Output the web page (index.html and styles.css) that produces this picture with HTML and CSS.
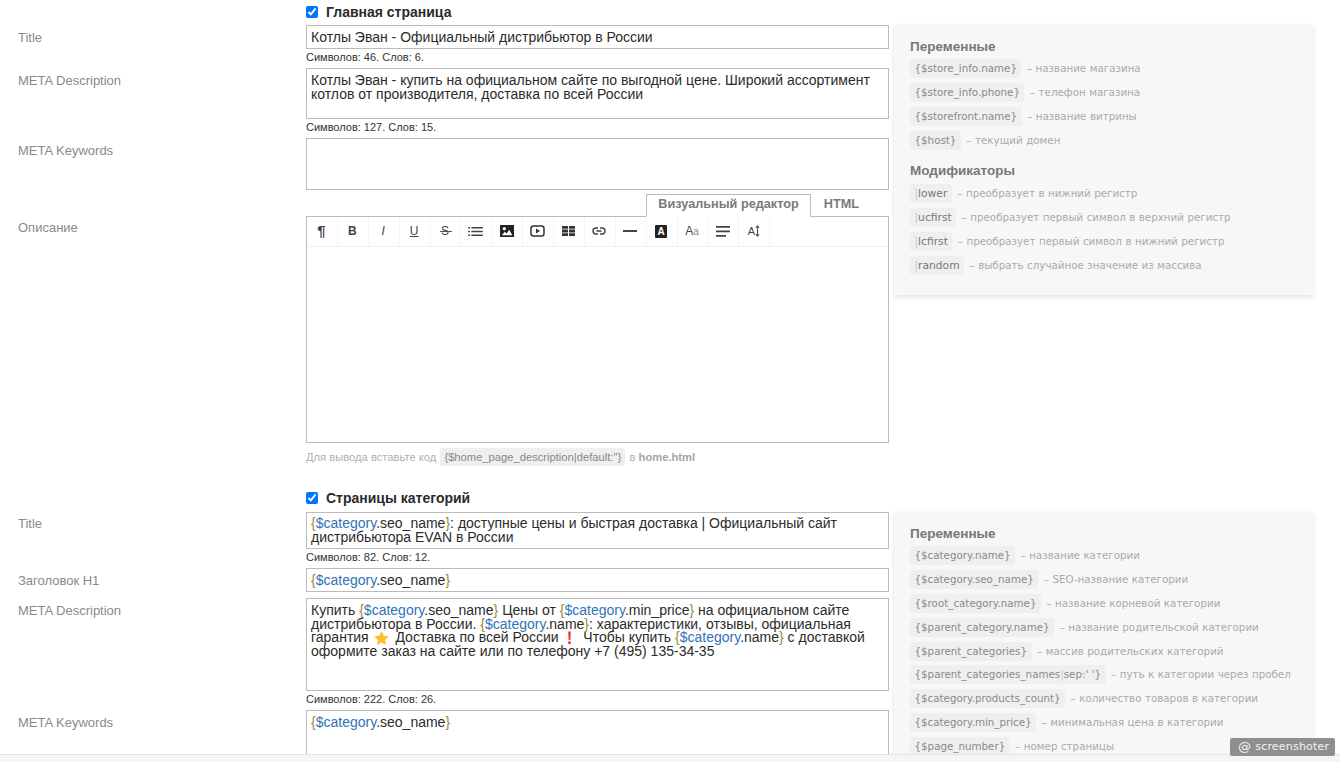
FILE: index.html
```html
<!DOCTYPE html>
<html lang="ru">
<head>
<meta charset="utf-8">
<title>SEO</title>
<link rel="stylesheet" href="styles.css">
</head>
<body>
<main class="page">
  <section class="section section-home">
    <div class="form">
      <label class="check"><input type="checkbox" checked> <span>Главная страница</span></label>
      <div class="row"><div class="label">Title</div><div class="field"><div class="box box-line">Котлы Эван - Официальный дистрибьютор в России</div><div class="count">Символов: 46. Слов: 6.</div></div></div>
      <div class="row"><div class="label">META Description</div><div class="field"><div class="box box-51">Котлы Эван - купить на официальном сайте по выгодной цене. Широкий ассортимент котлов от производителя, доставка по всей России</div><div class="count">Символов: 127. Слов: 15.</div></div></div>
      <div class="row"><div class="label">META Keywords</div><div class="field"><div class="box box-52"></div></div></div>
      <div class="row row-editor"><div class="label label-editor">Описание</div><div class="field">
        <div class="tabs"><span class="tab tab-active">Визуальный редактор</span><span class="tab">HTML</span></div>
        <div class="editor">
          <div class="toolbar">
            <span class="tool t-para">¶</span>
            <span class="tool t-b">B</span>
            <span class="tool t-i">I</span>
            <span class="tool t-u">U</span>
            <span class="tool t-s">S</span>
            <span class="tool"><svg width="15" height="11" viewBox="0 0 16 12"><path d="M0 1h2v1.600H0zM3.500 1H16v1.600H3.500zM0 5.200h2v1.600H0zM3.500 5.200H16v1.600H3.500zM0 9.400h2V11H0zM3.500 9.400H16V11H3.500z" fill="#444"/></svg></span>
            <span class="tool"><svg width="14" height="12" viewBox="0 0 14 12"><path d="M0 0h14v12H0z" fill="#222"/><circle cx="4.300" cy="3.700" r="1.600" fill="#fff"/><path d="M1.800 10.200l3-3.400 1.800 1.600 2.700-3.600 3 5.400z" fill="#fff"/></svg></span>
            <span class="tool"><svg width="15" height="12" viewBox="0 0 15 12"><rect x="1" y="1" width="13" height="10" rx="2.500" fill="none" stroke="#333" stroke-width="1.500"/><path d="M6 3.600l4 2.400-4 2.400z" fill="#333"/></svg></span>
            <span class="tool"><svg width="13" height="10" viewBox="0 0 13 10"><path d="M0 0h6v2.800H0zM7 0h6v2.800H7zM0 3.600h6v2.800H0zM7 3.600h6v2.800H7zM0 7.200h6V10H0zM7 7.200h6V10H7z" fill="#333"/></svg></span>
            <span class="tool"><svg width="14" height="8" viewBox="0 0 14 8"><path d="M6 1H4a3 3 0 0 0 0 6h2M8 1h2a3 3 0 0 1 0 6H8M4.500 4h5" fill="none" stroke="#444" stroke-width="1.400"/></svg></span>
            <span class="tool"><svg width="14" height="2" viewBox="0 0 14 2"><path d="M0 0h14v2H0z" fill="#444"/></svg></span>
            <span class="tool"><span class="t-bg">A</span></span>
            <span class="tool t-aa">A<small>a</small></span>
            <span class="tool"><svg width="14" height="11" viewBox="0 0 14 11"><path d="M0 0h14v1.700H0zM0 4.500h14v1.700H0zM0 9h10v1.700H0z" fill="#444"/></svg></span>
            <span class="tool t-lh">A<svg width="5" height="12" viewBox="0 0 5 12"><path d="M2.500 0l2.200 2.800H3.100v6.400h1.600L2.500 12 .3 9.200h1.600V2.800H.3z" fill="#555"/></svg></span>
          </div>
        </div>
        <div class="help">Для вывода вставьте код <code class="help-code">{$home_page_description|default:''}</code> в <b>home.html</b></div>
      </div></div>
    </div>
    <aside class="panel panel-home">
      <h4 class="panel-title">Переменные</h4>
      <div class="var"><code>{$store_info.name}</code> – название магазина</div>
      <div class="var"><code>{$store_info.phone}</code> – телефон магазина</div>
      <div class="var"><code>{$storefront.name}</code> – название витрины</div>
      <div class="var"><code>{$host}</code> – текущий домен</div>
      <h4 class="panel-title panel-title-2">Модификаторы</h4>
      <div class="var"><code class="mod"><i>|</i>lower</code> – преобразует в нижний регистр</div>
      <div class="var"><code class="mod"><i>|</i>ucfirst</code> – преобразует первый символ в верхний регистр</div>
      <div class="var"><code class="mod"><i>|</i>lcfirst</code> – преобразует первый символ в нижний регистр</div>
      <div class="var"><code class="mod"><i>|</i>random</code> – выбрать случайное значение из массива</div>
    </aside>
  </section>

  <section class="section section-cat">
    <div class="form">
      <label class="check"><input type="checkbox" checked> <span>Страницы категорий</span></label>
      <div class="row"><div class="label label-tight">Title</div><div class="field"><div class="box box-two"><span class="tk">{</span><span class="tv">$category</span>.seo_name<span class="tk">}</span>: доступные цены и быстрая доставка | Официальный сайт дистрибьютора EVAN в России</div><div class="count">Символов: 82. Слов: 12.</div></div></div>
      <div class="row row-h1"><div class="label">Заголовок H1</div><div class="field"><div class="box box-line"><span class="tk">{</span><span class="tv">$category</span>.seo_name<span class="tk">}</span></div></div></div>
      <div class="row"><div class="label">META Description</div><div class="field"><div class="box box-93">Купить <span class="tk">{</span><span class="tv">$category</span>.seo_name<span class="tk">}</span> Цены от <span class="tk">{</span><span class="tv">$category</span>.min_price<span class="tk">}</span> на официальном сайте дистрибьютора в России. <span class="tk">{</span><span class="tv">$category</span>.name<span class="tk">}</span>: характеристики, отзывы, официальная гарантия <svg class="emoji emoji-star" width="15" height="14" viewBox="0 0 24 23"><path d="M12 0l3.700 7.700 8.300 1.100-6 5.900 1.500 8.300L12 19l-7.500 4L6 14.700 0 8.800l8.300-1.100z" fill="#fbc02d"/></svg> Доставка по всей России <svg class="emoji emoji-mark" width="7" height="14" viewBox="0 0 8 15"><path d="M2.500 0h3L5 10H3zM4 11.300a1.700 1.700 0 1 1 0 3.400 1.700 1.700 0 0 1 0-3.400z" fill="#e53935"/></svg>&nbsp; Чтобы купить <span class="tk">{</span><span class="tv">$category</span>.name<span class="tk">}</span> с доставкой оформите заказ на сайте или по телефону +7 (495) 135-34-35</div><div class="count">Символов: 222. Слов: 26.</div></div></div>
      <div class="row"><div class="label">META Keywords</div><div class="field"><div class="box box-52"><span class="tk">{</span><span class="tv">$category</span>.seo_name<span class="tk">}</span></div></div></div>
    </div>
    <aside class="panel panel-cat">
      <h4 class="panel-title">Переменные</h4>
      <div class="var"><code>{$category.name}</code> – название категории</div>
      <div class="var"><code>{$category.seo_name}</code> – SEO-название категории</div>
      <div class="var"><code>{$root_category.name}</code> – название корневой категории</div>
      <div class="var"><code>{$parent_category.name}</code> – название родительской категории</div>
      <div class="var"><code>{$parent_categories}</code> – массив родительских категорий</div>
      <div class="var"><code>{$parent_categories_names<i>|</i>sep:' '}</code> – путь к категории через пробел</div>
      <div class="var"><code>{$category.products_count}</code> – количество товаров в категории</div>
      <div class="var"><code>{$category.min_price}</code> – минимальная цена в категории</div>
      <div class="var"><code>{$page_number}</code> – номер страницы</div>
    </aside>
  </section>
</main>
<div class="bottom-bar"></div>
<div class="badge"><span class="badge-at">@</span>screenshoter</div>
</body>
</html>
```
FILE: styles.css
```css
html, body {
  margin: 0;
  height: 762px;
  overflow: hidden;
  background: #fff;
}
body {
  font-family: "Liberation Sans", Arial, sans-serif;
  font-size: 14px;
  color: #2b2b2b;
}
.page {
  display: flex;
  flex-direction: column;
  gap: 16px;
  height: 762px;
  overflow: hidden;
}
.section {
  display: flex;
  align-items: flex-start;
  gap: 5px;
  flex: none;
}
.form {
  width: 889px;
  flex: none;
  display: flex;
  flex-direction: column;
}
.check {
  display: flex;
  align-items: center;
  height: 24px;
  margin-bottom: 1px;
  margin-left: 306px;
  font-size: 14px;
  font-weight: bold;
  color: #2b2b2b;
  gap: 8px;
}
.check input {
  width: 12px;
  height: 12px;
  margin: 0;
  accent-color: #0075ff;
}
.section-cat .check { margin-bottom: 2px; }
.row {
  display: grid;
  grid-template-columns: 306px 583px;
  margin-bottom: 4px;
}
.label {
  padding: 5px 0 0 18px;
  color: #8a8a8a;
  font-size: 13px;
  line-height: 16px;
}
.label-tight { padding-top: 4px; }
.label-editor { padding-top: 26px; }
.box {
  box-sizing: border-box;
  border: 1px solid #bbb;
  padding: 5px 4px 4px;
  font-size: 14px;
  line-height: 13.500px;
  color: #2b2b2b;
  background: #fff;
}
.box-line { height: 24px; }
.box-51 { height: 51px; }
.box-52 { height: 52px; }
.box-two { height: 37px; padding-top: 4px; }
.box-93 { height: 93px; }
.count {
  font-size: 11px;
  line-height: 14px;
  margin-top: 1px;
  color: #333;
}
.row-h1 { margin-bottom: 6px; }
.tk { color: #9a8a3c; }
.tv { color: #2f74b5; }
.emoji {
  vertical-align: 1px;
  margin: -4px 1px;
}
.emoji-star { margin-right: 3px; }
.emoji-mark { margin-left: 3px; margin-right: 3px; }
.tabs {
  display: flex;
  justify-content: flex-end;
  height: 23px;
  padding-right: 17px;
  position: relative;
  z-index: 1;
  margin-bottom: -1px;
}
.tab {
  box-sizing: border-box;
  height: 23px;
  padding: 0 12px;
  font-weight: bold;
  font-size: 12.700px;
  line-height: 18px;
  color: #7a7a7a;
  border: 1px solid transparent;
}
.tab-active {
  padding: 0 11px;
  border-color: #bbb;
  border-bottom-color: #fff;
  background: #fff;
}
.editor {
  border: 1px solid #bbb;
  height: 227px;
  box-sizing: border-box;
}
.toolbar {
  display: flex;
  height: 29px;
  border-bottom: 1px solid #efefef;
}
.tool {
  position: relative;
  box-sizing: border-box;
  width: 30.900px;
  height: 29px;
  padding: 0 1px 1px 0;
  border-right: 1px solid #f5f5f5;
  display: flex;
  align-items: center;
  justify-content: center;
  font-size: 12px;
  color: #444;
}
.t-para { font-size: 15px; font-weight: bold; padding-bottom: 3px; }
.t-b { font-weight: bold; }
.t-i { font-style: italic; }
.t-u { text-decoration: underline; }
.t-s::after {
  content: "";
  position: absolute;
  left: 9px;
  top: 14px;
  width: 12px;
  height: 1px;
  background: #555;
}
.t-bg {
  display: block;
  width: 12px;
  height: 13px;
  background: #222;
  color: #fff;
  font-size: 10px;
  font-weight: bold;
  line-height: 13px;
  text-align: center;
  border-radius: 1px;
}
.t-aa small { font-size: 10px; color: #888; }
.t-lh { font-size: 11px; }
.help {
  margin-top: 5px;
  font-size: 11.200px;
  line-height: 18px;
  color: #b0b0b0;
}
.help b { color: #a5a5a5; font-size: 11.200px; }
.help-code {
  font-family: "Liberation Sans", Arial, sans-serif;
  background: #efefef;
  color: #888;
  padding: 3px 4px;
  margin: 0 1px;
  border-radius: 3px;
}
.panel {
  box-sizing: border-box;
  width: 419px;
  flex: none;
  background: #f7f7f7;
  padding: 14px 16px;
  box-shadow: 0 2px 5px rgba(0, 0, 0, .12);
  font-family: "DejaVu Sans", Verdana, sans-serif;
  font-size: 10.300px;
  word-spacing: .2px;
  color: #aaa;
}
.panel-home { margin-top: 25px; height: 270px; }
.panel-cat { margin-top: 26px; height: 300px; }
.panel-cat .var { height: 23.875px; }
.panel-title {
  margin: 0 0 3px;
  font-family: "Liberation Sans", Arial, sans-serif;
  font-size: 13.500px;
  line-height: 16px;
  font-weight: bold;
  color: #777;
}
.panel-title-2 { margin: 9px 0 4px; }
.var {
  height: 24px;
  line-height: 20px;
  white-space: nowrap;
}
.var code {
  display: inline-block;
  font-family: "DejaVu Sans", Verdana, sans-serif;
  font-size: 10.300px;
  line-height: 19px;
  color: #8a8a8a;
  background: #efefef;
  padding: 0 4.500px;
  margin-right: 2px;
  border-radius: 3px;
}
.var .mod { color: #777; font-size: 10.700px; }
.var i { font-style: normal; color: #c8c8c8; }
.bottom-bar {
  position: fixed;
  left: 0;
  right: 0;
  bottom: 0;
  height: 7px;
  background: #f5f5f5;
  border-top: 1px solid #e4e4e4;
}
.badge {
  position: fixed;
  left: 1230px;
  top: 738px;
  width: 105px;
  height: 18px;
  box-sizing: border-box;
  background: #8f8f8f;
  color: #f2f2f2;
  font-family: "DejaVu Sans", Verdana, sans-serif;
  font-size: 11px;
  letter-spacing: .2px;
  line-height: 18px;
  padding-left: 8px;
  border-radius: 2px;
  display: flex;
  gap: 4px;
}
.badge-at { font-size: 13px; }
```
